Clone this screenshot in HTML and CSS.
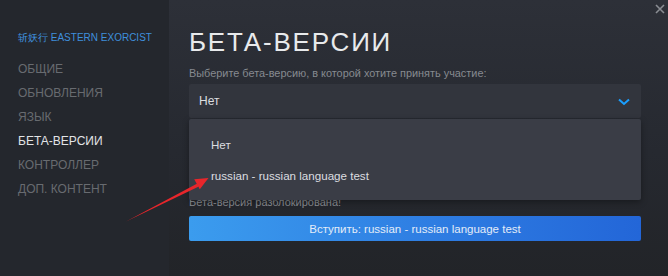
FILE: index.html
```html
<!DOCTYPE html>
<html lang="ru">
<head>
<meta charset="utf-8">
<link rel="stylesheet" href="styles.css">
</head>
<body>
<div class="window">
  <aside class="sidebar">
    <div class="game">斩妖行 EASTERN EXORCIST</div>
    <nav class="nav">
      <div class="nav-item">Общие</div>
      <div class="nav-item">Обновления</div>
      <div class="nav-item">Язык</div>
      <div class="nav-item active">Бета-версии</div>
      <div class="nav-item">Контроллер</div>
      <div class="nav-item">Доп. контент</div>
    </nav>
  </aside>
  <main class="main">
    <h1 class="title">БЕТА-ВЕРСИИ</h1>
    <div class="label">Выберите бета-версию, в которой хотите принять участие:</div>
    <div class="select-wrap">
      <div class="select">
        <span>Нет</span>
        <svg class="chevron" width="12" height="8" viewBox="0 0 12 8"><path d="M1 1.5 L6 6 L11 1.5" fill="none" stroke="#1a9fff" stroke-width="2"/></svg>
      </div>
      <div class="menu">
        <div class="menu-item">Нет</div>
        <div class="menu-item">russian - russian language test</div>
      </div>
    </div>
    <div class="status">Бета-версия разблокирована!</div>
    <button class="join">Вступить: russian - russian language test</button>
  </main>
  <svg class="close" width="10" height="10" viewBox="0 0 10 10"><path d="M1 1 L9 9 M9 1 L1 9" stroke="#8a8d93" stroke-width="1.6"/></svg>
  <svg class="arrow" width="668" height="276" viewBox="0 0 668 276">
    <path d="M126 221.5 L197.3 183.6 L198.8 186.4 Z" fill="#e8262b"/>
    <path d="M208.5 178 L194.2 179.2 L199.8 189.2 Z" fill="#e8262b"/>
  </svg>
</div>
</body>
</html>
```
FILE: styles.css
```css
html, body {
  margin: 0;
  padding: 0;
  width: 668px;
  height: 276px;
  overflow: hidden;
  background: #23262c;
  font-family: "Liberation Sans", Arial, sans-serif;
}
.window {
  position: relative;
  display: flex;
  width: 668px;
  height: 276px;
}
.sidebar {
  width: 169px;
  flex: none;
  background: #24272d;
  padding: 31px 0 0 18px;
  box-sizing: border-box;
}
.game {
  color: #3f8fdc;
  font-size: 10px;
  line-height: 14px;
  white-space: nowrap;
}
.nav {
  margin-top: 12px;
  display: flex;
  flex-direction: column;
}
.nav-item {
  text-transform: uppercase;
  color: #686b70;
  font-size: 12px;
  line-height: 24px;
  height: 24px;
}
.nav-item.active {
  color: #e2e4e6;
}
.main {
  flex: 1;
  background: linear-gradient(180deg, #2d3038 0%, #262930 55%, #222428 100%);
  padding: 25px 27px 0 20px;
  box-sizing: border-box;
  display: flex;
  flex-direction: column;
}
.title {
  margin: 0;
  font-weight: normal;
  font-size: 26px;
  line-height: 34px;
  letter-spacing: 1.8px;
  color: #e8eaec;
}
.label {
  margin-top: 6px;
  font-size: 10.9px;
  line-height: 16px;
  color: #868a90;
}
.select-wrap {
  position: relative;
  margin-top: 3px;
}
.select {
  height: 34px;
  background: #32353d;
  border-radius: 2px;
  display: flex;
  align-items: center;
  justify-content: space-between;
  padding: 0 11px 0 10px;
  color: #dcdee0;
  font-size: 12px;
}
.chevron {
  margin-top: 1px;
}
.menu {
  position: absolute;
  left: 0;
  right: 0;
  top: 35px;
  height: 81px;
  background: #3a3d46;
  border-radius: 2px;
  box-sizing: border-box;
  padding: 10px 0 0 22px;
  box-shadow: 0 2px 6px rgba(0,0,0,0.35);
  z-index: 2;
}
.menu-item {
  color: #dcdee0;
  font-size: 11.6px;
  line-height: 31px;
}
.status {
  margin-top: 76px;
  font-size: 11px;
  line-height: 16px;
  color: #8a8d92;
}
.join {
  margin-top: 6px;
  height: 25px;
  border: none;
  border-radius: 2px;
  background: linear-gradient(90deg, #3b9cee 0%, #2f7fe3 50%, #2366d8 100%);
  color: #e3ecf8;
  font-family: "Liberation Sans", Arial, sans-serif;
  font-size: 11.5px;
  padding: 0;
}
.close {
  position: absolute;
  right: 3px;
  top: 4px;
}
.arrow {
  position: absolute;
  left: 0;
  top: 0;
  z-index: 3;
  pointer-events: none;
}
```
